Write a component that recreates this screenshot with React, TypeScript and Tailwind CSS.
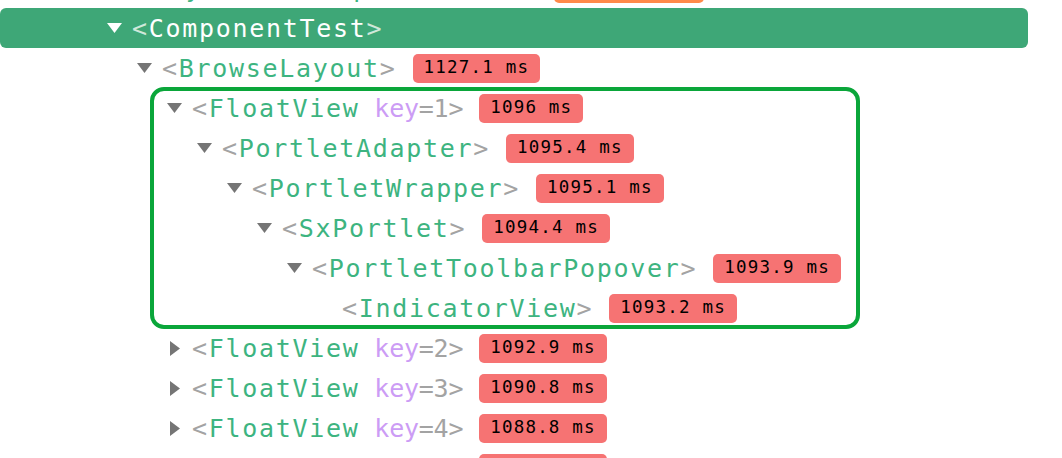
import React from "react";

type Row = {
  level: number;
  name: string;
  keyVal?: string;
  time: string;
  toggle: "open" | "closed" | "none";
  tone?: "red" | "orange";
  selected?: boolean;
};

const mono = "font-['DejaVu_Sans_Mono','Liberation_Mono',monospace]";

const top: Row[] = [
  { level: -1, name: "StoryRendererSpecHarness", time: "1140.2 ms", toggle: "open", tone: "orange" },
  { level: 0, name: "ComponentTest", time: "", toggle: "open", selected: true },
  { level: 1, name: "BrowseLayout", time: "1127.1 ms", toggle: "open" },
];

const boxed: Row[] = [
  { level: 2, name: "FloatView", keyVal: "1", time: "1096 ms", toggle: "open" },
  { level: 3, name: "PortletAdapter", time: "1095.4 ms", toggle: "open" },
  { level: 4, name: "PortletWrapper", time: "1095.1 ms", toggle: "open" },
  { level: 5, name: "SxPortlet", time: "1094.4 ms", toggle: "open" },
  { level: 6, name: "PortletToolbarPopover", time: "1093.9 ms", toggle: "open" },
  { level: 7, name: "IndicatorView", time: "1093.2 ms", toggle: "none" },
];

const rest: Row[] = [
  { level: 2, name: "FloatView", keyVal: "2", time: "1092.9 ms", toggle: "closed" },
  { level: 2, name: "FloatView", keyVal: "3", time: "1090.8 ms", toggle: "closed" },
  { level: 2, name: "FloatView", keyVal: "4", time: "1088.8 ms", toggle: "closed" },
  { level: 2, name: "FloatView", keyVal: "5", time: "1086.3 ms", toggle: "closed" },
];

function Toggle({ kind, light }: { kind: Row["toggle"]; light?: boolean }) {
  const fill = light ? "#ffffff" : "#757575";
  return (
    <span className="mr-[10px] flex h-[16px] w-[15px] items-center justify-center">
      {kind === "open" && (
        <svg width="15" height="10" viewBox="0 0 15 10">
          <polygon points="0,0 15,0 7.5,10" fill={fill} />
        </svg>
      )}
      {kind === "closed" && (
        <svg width="10" height="15" viewBox="0 0 10 15">
          <polygon points="0,0 10,7.5 0,15" fill={fill} />
        </svg>
      )}
    </span>
  );
}

function TreeRow({ row }: { row: Row }) {
  const bracket = row.selected ? "text-[#cfe8da]" : "text-[#a3a3a3]";
  return (
    <div
      className={`flex h-[40px] items-center ${row.selected ? "w-[1028px] rounded-[6px] bg-[#3ea777]" : ""}`}
      style={{ paddingLeft: 107 + 30 * row.level }}
    >
      <Toggle kind={row.toggle} light={row.selected} />
      <span className={`${mono} whitespace-nowrap text-[25px] leading-none`}>
        <span className="tracking-[1.7px]">
          <span className={bracket}>&lt;</span>
          <span className={row.selected ? "text-white" : "text-[#3db480]"}>{row.name}</span>
          {!row.keyVal && <span className={bracket}>&gt;</span>}
        </span>
        {row.keyVal && (
          <span className="tracking-[-0.25px]">
            <span> </span>
            <span className="text-[#cc9cf5]">key</span>
            <span className={bracket}>={row.keyVal}&gt;</span>
          </span>
        )}
      </span>
      {row.time && (
        <span
          className={`${mono} ml-[16px] flex h-[29px] items-center justify-center rounded-[5px] px-[11px] text-[17.5px] leading-none tracking-[1.2px] text-black ${
            row.tone === "orange" ? "w-[150px] bg-[#ff8a4a]" : "bg-[#f67373]"
          }`}
        >
          {row.time}
        </span>
      )}
    </div>
  );
}

export default function App() {
  return (
    <div className="h-[458px] w-[1062px] overflow-hidden bg-white">
      <div className="mt-[-32px]">
        {top.map((r, i) => (
          <TreeRow key={"t" + i} row={r} />
        ))}
        <div className="relative">
          {boxed.map((r, i) => (
            <TreeRow key={"b" + i} row={r} />
          ))}
          <div className="pointer-events-none absolute left-[150px] top-[-1px] h-[242px] w-[710px] rounded-[14px] border-4 border-[#0aa63a]" />
        </div>
        {rest.map((r, i) => (
          <TreeRow key={"r" + i} row={r} />
        ))}
      </div>
    </div>
  );
}
